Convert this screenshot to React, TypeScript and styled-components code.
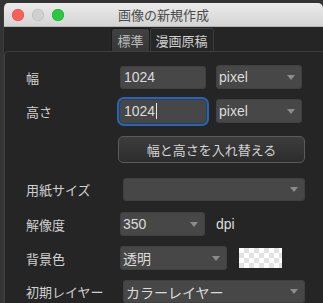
import React from "react";
import styled, { createGlobalStyle } from "styled-components";

const GlobalStyle = createGlobalStyle`
  html, body {
    margin: 0;
    padding: 0;
    background: #333333;
    overflow: hidden;
  }
  body {
    font-family: "Liberation Sans", "Noto Sans CJK JP", sans-serif;
    -webkit-font-smoothing: antialiased;
  }
`;

const Window = styled.div`
  margin: 3px 0 0 3px;
  width: 320px;
  height: 300px;
  background: #252525;
  border-left: 1px solid #3c3c3c;
  border-radius: 5px 5px 0 0;
  overflow: hidden;
  box-sizing: border-box;
`;

const TitleBar = styled.div`
  height: 23px;
  display: flex;
  align-items: center;
  position: relative;
  background: linear-gradient(#ebebeb, #d4d4d4);
  border-bottom: 1px solid #b4b4b4;
`;

const Lights = styled.div`
  display: flex;
  gap: 8px;
  padding-left: 8px;
`;

const Light = styled.span<{ color: string; edge: string }>`
  width: 12px;
  height: 12px;
  border-radius: 50%;
  background: ${(p) => p.color};
  box-shadow: inset 0 0 0 0.5px ${(p) => p.edge};
`;

const Title = styled.div`
  position: absolute;
  left: 0;
  right: 0;
  text-align: center;
  font-size: 13px;
  color: #4a4a4a;
  pointer-events: none;
  font-family: "Noto Sans CJK JP", sans-serif;
`;

const TabsRow = styled.div`
  display: flex;
  justify-content: center;
  padding-top: 1px;
  margin-left: -2px;
  position: relative;
  z-index: 1;
`;

const Tab = styled.div<{ active?: boolean }>`
  height: 23px;
  padding: 0 5px;
  display: flex;
  align-items: center;
  font-size: 13px;
  font-family: "Noto Sans CJK JP", sans-serif;
  color: ${(p) => (p.active ? "#bdbdbd" : "#d2d2d2")};
  background: ${(p) => (p.active ? "linear-gradient(#414141, #363636)" : "#262626")};
  border: 1px solid ${(p) => (p.active ? "#1c1c1c" : "#3c3c3c")};
  border-bottom: none;
  border-radius: 3px 3px 0 0;
  box-sizing: border-box;
`;

const Panel = styled.div`
  margin: 0 0 0 0;
  border: 1px solid #3e3e3e;
  border-radius: 4px;
  padding: 13px 19px 0 20px;
  height: 260px;
  box-sizing: border-box;
  margin-right: -2px;
`;

const Row = styled.div<{ top: number; h?: number }>`
  display: grid;
  grid-template-columns: 95px 1fr;
  align-items: center;
  margin-top: ${(p) => p.top}px;
  height: ${(p) => p.h ?? 23}px;
`;

const Label = styled.div`
  font-size: 13px;
  color: #d0d0d0;
  font-family: "Noto Sans CJK JP", sans-serif;
  padding-left: 1px;
`;

const Controls = styled.div<{ gap?: number }>`
  display: flex;
  align-items: center;
  gap: ${(p) => p.gap ?? 10}px;
  height: 100%;
`;

const Field = styled.div<{ w: number; inset?: number; focused?: boolean }>`
  width: ${(p) => p.w}px;
  height: 23px;
  margin-left: ${(p) => p.inset ?? 0}px;
  background: #474747;
  border-radius: 4px;
  display: flex;
  align-items: center;
  padding: 0 4px;
  box-sizing: border-box;
  font-size: 14px;
  color: #dcdcdc;
  box-shadow: ${(p) =>
    p.focused ? "0 0 0 1px #1d3f6e, 0 0 0 3px #2f64a8" : "inset 0 0 0 1px #404040"};
`;

const Caret = styled.span`
  display: inline-block;
  width: 1px;
  height: 16px;
  background: #e8e8e8;
  margin-left: 1px;
`;

const Select = styled.div<{ w?: number; inset?: number }>`
  ${(p) => (p.w ? `width: ${p.w}px;` : "flex: 1;")}
  height: ${(p) => (p.w ? 24 : 23)}px;
  margin-left: ${(p) => p.inset ?? 0}px;
  background: #474747;
  border-radius: 4px;
  display: flex;
  align-items: center;
  justify-content: space-between;
  padding: 0 7px 0 3px;
  box-sizing: border-box;
  font-size: 14px;
  color: #dcdcdc;
  box-shadow: inset 0 0 0 1px #404040;
  font-family: "Liberation Sans", "Noto Sans CJK JP", sans-serif;
`;

const Arrow = styled.span`
  width: 0;
  height: 0;
  border-left: 4px solid transparent;
  border-right: 4px solid transparent;
  border-top: 5px solid #8c8c8c;
`;

const SwapButton = styled.div`
  flex: 1;
  height: 27px;
  margin-left: -2px;
  border: 1px solid #5a5a5a;
  border-radius: 5px;
  background: linear-gradient(#3d3d3d, #2c2c2c);
  display: flex;
  align-items: center;
  justify-content: center;
  font-size: 13px;
  color: #d4d4d4;
  font-family: "Noto Sans CJK JP", sans-serif;
  box-sizing: border-box;
`;

const Unit = styled.span`
  font-size: 14px;
  color: #dcdcdc;
`;

const Swatch = styled.div`
  width: 43px;
  height: 20px;
  margin-left: 2px;
  background-color: #ffffff;
  background-image: conic-gradient(#e2e2e2 25%, transparent 0 50%, #e2e2e2 0 75%, transparent 0);
  background-size: 10px 10px;
`;

const SelectBox = ({ w, inset, value }: { w?: number; inset?: number; value?: string }) => (
  <Select w={w} inset={inset}>
    <span>{value}</span>
    <Arrow />
  </Select>
);

export default function App() {
  return (
    <>
      <GlobalStyle />
      <Window>
        <TitleBar>
          <Lights>
            <Light color="#fc5f57" edge="#de4a42" />
            <Light color="#d0d0d0" edge="#b8b8b8" />
            <Light color="#29c840" edge="#1ea931" />
          </Lights>
          <Title>画像の新規作成</Title>
        </TitleBar>
        <TabsRow>
          <Tab active>標準</Tab>
          <Tab>漫画原稿</Tab>
        </TabsRow>
        <Panel>
          <Row top={0}>
            <Label>幅</Label>
            <Controls>
              <Field w={86} inset={0}>1024</Field>
              <SelectBox w={86} value="pixel" />
            </Controls>
          </Row>
          <Row top={11}>
            <Label>高さ</Label>
            <Controls>
              <Field w={86} focused>
                1024
                <Caret />
              </Field>
              <SelectBox w={86} value="pixel" />
            </Controls>
          </Row>
          <Row top={14} h={27}>
            <div />
            <Controls>
              <SwapButton>幅と高さを入れ替える</SwapButton>
            </Controls>
          </Row>
          <Row top={15}>
            <Label>用紙サイズ</Label>
            <Controls>
              <SelectBox inset={3} />
            </Controls>
          </Row>
          <Row top={11} h={24}>
            <Label>解像度</Label>
            <Controls gap={11}>
              <SelectBox w={85} value="350" />
              <Unit>dpi</Unit>
            </Controls>
          </Row>
          <Row top={10} h={24}>
            <Label>背景色</Label>
            <Controls gap={10}>
              <SelectBox w={107} value="透明" />
              <Swatch />
            </Controls>
          </Row>
          <Row top={10}>
            <Label>初期レイヤー</Label>
            <Controls>
              <SelectBox inset={3} value="カラーレイヤー" />
            </Controls>
          </Row>
        </Panel>
      </Window>
    </>
  );
}
